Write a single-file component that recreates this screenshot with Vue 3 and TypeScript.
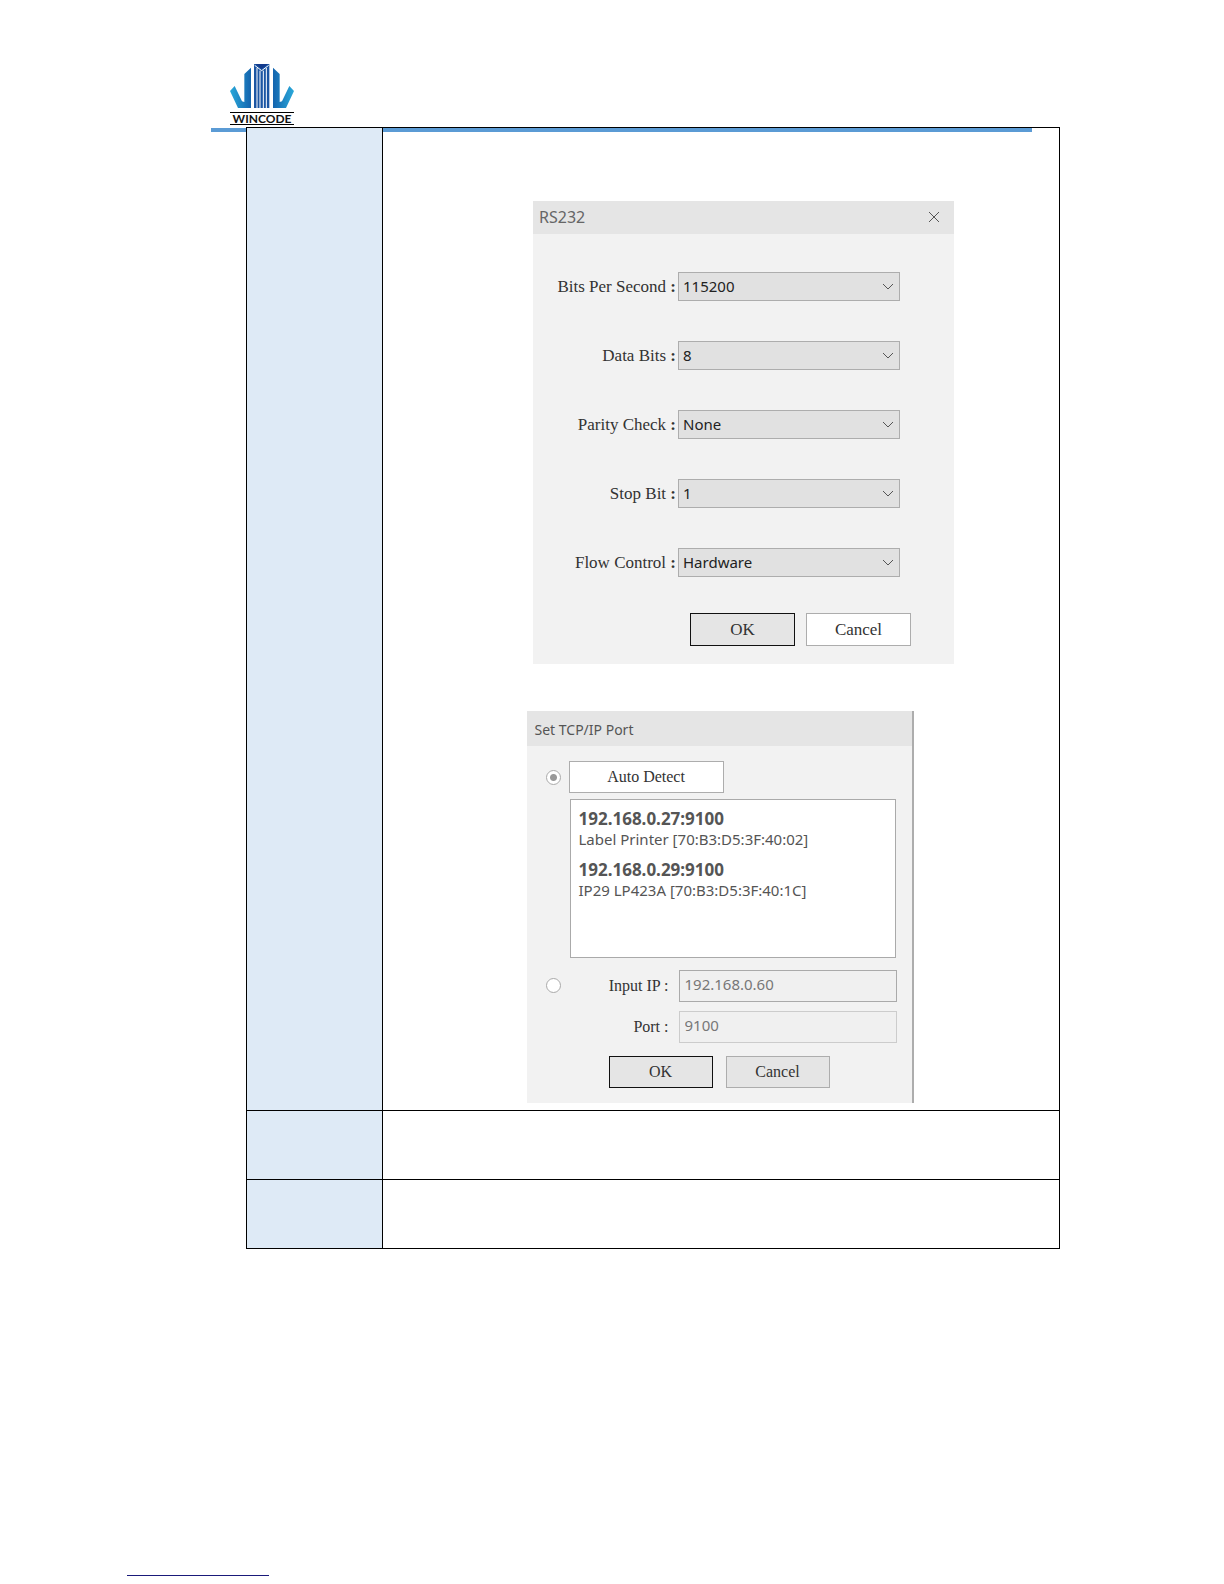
<script setup lang="ts">
import { ref } from 'vue'

interface SerialField {
  id: string
  label: string
  options: string[]
}

interface Device {
  address: string
  detail: string
}

const fields: SerialField[] = [
  { id: 'bits-per-second', label: 'Bits Per Second', options: ['115200'] },
  { id: 'data-bits', label: 'Data Bits', options: ['8'] },
  { id: 'parity-check', label: 'Parity Check', options: ['None'] },
  { id: 'stop-bit', label: 'Stop Bit', options: ['1'] },
  { id: 'flow-control', label: 'Flow Control', options: ['Hardware'] },
]

const devices: Device[] = [
  { address: '192.168.0.27:9100', detail: 'Label Printer [70:B3:D5:3F:40:02]' },
  { address: '192.168.0.29:9100', detail: 'IP29 LP423A [70:B3:D5:3F:40:1C]' },
]

const mode = ref('auto')
const ip = ref('192.168.0.60')
const port = ref('9100')
</script>

<template>
  <div class="page">
    <header class="header">
      <div class="logo">
        <svg class="mark" viewBox="0 0 192 132" aria-hidden="true">
          <defs>
            <linearGradient id="leaf-left" x1="0" y1="0" x2="1" y2="0">
              <stop offset="0" stop-color="#2aa9da" />
              <stop offset="1" stop-color="#1464ae" />
            </linearGradient>
            <linearGradient id="leaf-right" x1="1" y1="0" x2="0" y2="0">
              <stop offset="0" stop-color="#2aa9da" />
              <stop offset="1" stop-color="#1464ae" />
            </linearGradient>
          </defs>
          <path d="M0 81 L14 66 L36 112 L43 114 L43 30 L63 11 L63 132 L24 132 Z" fill="url(#leaf-left)" />
          <path d="M192 81 L178 66 L156 112 L149 114 L149 30 L129 11 L129 132 L168 132 Z" fill="url(#leaf-right)" />
          <path d="M72 0 H118 V132 H72 Z" fill="#1b55a3" />
          <path d="M76 0 H114 L95 15 Z" fill="#123a8c" />
          <path d="M74 4 L95 20 L116 4" fill="none" stroke="#fff" stroke-width="3" />
          <path d="M81 12 V132 M90 20 V132 M100 20 V132 M109 12 V132" stroke="#fff" stroke-width="3" />
        </svg>
        <span class="wordmark">WINCODE</span>
      </div>
    </header>

    <table class="sheet">
      <tbody>
        <tr>
          <th scope="row"></th>
          <td class="dialogs">
            <div class="indent">
              <form class="dialog serial" @submit.prevent>
                <div class="title-bar">
                  <h2>RS232</h2>
                  <button class="close" type="button">
                    <svg class="stroke" viewBox="0 0 12 12" aria-hidden="true">
                      <path d="M1 1 L11 11 M11 1 L1 11" />
                    </svg>
                  </button>
                </div>
                <div class="serial-body">
                  <div v-for="field in fields" :key="field.id" class="serial-row">
                    <label :for="field.id">{{ field.label }} <b>:</b></label>
                    <div class="picker">
                      <select :id="field.id">
                        <option v-for="option in field.options" :key="option">{{ option }}</option>
                      </select>
                      <svg class="stroke" viewBox="0 0 12 8" aria-hidden="true">
                        <path d="M1 1 L6 6 L11 1" />
                      </svg>
                    </div>
                  </div>
                </div>
                <div class="actions">
                  <button class="primary" type="submit">OK</button>
                  <button class="white" type="button">Cancel</button>
                </div>
              </form>
            </div>

            <form class="dialog network" @submit.prevent>
              <div class="title-bar">
                <h2>Set TCP/IP Port</h2>
              </div>
              <div class="network-body">
                <input v-model="mode" class="radio" type="radio" name="mode" value="auto" aria-labelledby="detect" />
                <button id="detect" class="detect" type="button">Auto Detect</button>
                <ul class="devices">
                  <li v-for="device in devices" :key="device.address">
                    <strong>{{ device.address }}</strong>
                    <span>{{ device.detail }}</span>
                  </li>
                </ul>
                <input v-model="mode" class="radio manual-radio" type="radio" name="mode" value="manual" aria-labelledby="ip-label" />
                <div class="manual">
                  <label id="ip-label" for="ip">Input IP <i>:</i></label>
                  <input id="ip" v-model="ip" class="entry" type="text" />
                  <label for="port">Port <i>:</i></label>
                  <input id="port" v-model="port" class="entry pale" type="text" />
                </div>
              </div>
              <div class="actions">
                <button class="primary" type="submit">OK</button>
                <button type="button">Cancel</button>
              </div>
            </form>
          </td>
        </tr>
        <tr class="short">
          <th scope="row"></th>
          <td></td>
        </tr>
        <tr class="short">
          <th scope="row"></th>
          <td></td>
        </tr>
      </tbody>
    </table>

    <hr class="footer-line" />
  </div>
</template>

<style>
body {
  margin: 0;
  background: #fff;
}
</style>

<style scoped>
.page {
  display: flex;
  flex-direction: column;
  box-sizing: border-box;
  min-height: 100vh;
  padding-bottom: 8px;
  font-family: "Liberation Serif", serif;
  font-size: 17px;
  color: #333;
}

.header {
  box-sizing: border-box;
  margin: 0 192px 0 211px;
  padding: 64px 19px 3px;
  border-bottom: 4px solid #5b9bd5;
}

.logo {
  width: 64px;
}

.mark {
  display: block;
  width: 64px;
  height: 44px;
  margin-bottom: 4px;
}

.wordmark {
  display: block;
  border-top: 1px solid #000;
  border-bottom: 1px solid #000;
  font-family: Lato, sans-serif;
  font-size: 12px;
  font-weight: 700;
  line-height: 11px;
  text-align: center;
  color: #111;
}

.sheet {
  position: relative;
  width: calc(100% - 410px);
  margin: -5px 164px 0 246px;
  border-collapse: collapse;
  table-layout: fixed;
}

.sheet th,
.sheet td {
  padding: 0;
  border: 1px solid #000;
}

.sheet th {
  width: 135px;
  background: #deeaf6;
}

.sheet .dialogs {
  padding: 73px 2px 7px 0;
}

.short {
  height: 69px;
}

.indent {
  padding-left: 47px;
  margin-bottom: 47px;
}

.dialog {
  box-sizing: border-box;
  margin: 0 auto;
  background: #f2f2f2;
}

.serial {
  width: 421px;
  padding-bottom: 18px;
}

.network {
  width: 387px;
  padding-bottom: 15px;
  border-right: 2px solid #adadad;
  font-size: 16px;
}

.title-bar {
  display: flex;
  align-items: center;
  justify-content: space-between;
  box-sizing: border-box;
  height: 33px;
  padding: 0 14px 2px 6px;
  background: #e5e5e5;
}

.network .title-bar {
  height: 35px;
  padding: 2px 8px 0;
}

h2 {
  margin: 0;
  font-family: "Noto Sans", sans-serif;
  font-size: 16px;
  font-weight: 400;
  line-height: 24px;
  color: #666;
}

.network h2 {
  font-size: 14px;
  color: #555;
}

.close {
  display: flex;
  padding: 0;
  border: 0;
  background: none;
}

.close svg {
  width: 12px;
  height: 12px;
}

.stroke {
  fill: none;
  stroke: #555;
}

.serial-body {
  display: flex;
  flex-direction: column;
  gap: 40px;
  padding: 38px 54px 36px 0;
}

.serial-row {
  display: flex;
  align-items: center;
  justify-content: flex-end;
  height: 29px;
}

.serial-row label {
  padding-right: 2px;
}

.picker {
  display: grid;
  width: 222px;
}

.picker > * {
  grid-area: 1 / 1;
}

.picker select {
  appearance: none;
  width: 100%;
  height: 29px;
  padding: 0 4px 2px;
  border: 1px solid #adadad;
  border-radius: 0;
  background: #e1e1e1;
  font-family: "Noto Sans", sans-serif;
  font-size: 15px;
  color: #222;
}

.picker svg {
  place-self: center end;
  width: 12px;
  height: 8px;
  margin-right: 6px;
  pointer-events: none;
}

.actions {
  display: flex;
  justify-content: flex-end;
  gap: 11px;
  padding-right: 43px;
}

.actions button,
.detect {
  width: 105px;
  height: 33px;
  padding: 0;
  border: 1px solid #adadad;
  background: #e5e5e5;
  font-family: inherit;
  font-size: inherit;
  color: #333;
}

.actions .primary {
  border-color: #111;
}

.actions .white,
.network .detect {
  background: #fff;
}

.network-body {
  display: grid;
  grid-template-columns: 15px 1fr;
  column-gap: 8px;
  padding: 15px 15px 13px 19px;
}

.radio {
  appearance: none;
  align-self: center;
  width: 15px;
  height: 15px;
  margin: 0;
  border: 1px solid #aaa;
  border-radius: 50%;
  background: #fff;
}

.radio:checked {
  background: radial-gradient(circle, #999 3px, #fff 4px);
}

.network .detect {
  width: 155px;
  height: 32px;
}

.devices {
  grid-column: 2;
  box-sizing: border-box;
  height: 159px;
  margin: 6px 1px 12px;
  padding: 9px 8px;
  border: 1px solid #aaa;
  background: #fff;
  list-style: none;
  font-family: "Noto Sans", sans-serif;
  font-size: 15px;
  line-height: 20px;
  color: #555;
}

.devices li {
  margin-bottom: 11px;
}

.devices strong,
.devices span {
  display: block;
}

.devices strong {
  font-size: 17px;
}

.manual-radio {
  align-self: start;
  margin-top: 8px;
}

.manual {
  display: grid;
  grid-template-columns: 1fr 218px;
  align-items: center;
  column-gap: 10px;
  row-gap: 9px;
}

.manual label {
  text-align: right;
}

.manual i {
  font-style: normal;
}

.entry {
  box-sizing: border-box;
  width: 100%;
  height: 32px;
  padding: 0 5px 4px;
  border: 1px solid #aaa;
  background: #f0f0f0;
  font-family: "Noto Sans", sans-serif;
  font-size: 15px;
  color: #777;
}

.pale {
  border-color: #ccc;
}

.network .actions {
  gap: 13px;
  padding-right: 82px;
}

.network .actions button {
  width: 104px;
  height: 32px;
}

.footer-line {
  width: 142px;
  height: 1px;
  margin: auto 0 0 127px;
  border: 0;
  background: #1a1a7a;
}
</style>
